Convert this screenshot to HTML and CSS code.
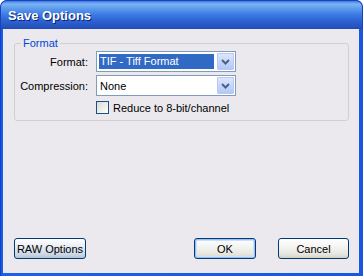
FILE: index.html
```html
<!DOCTYPE html>
<html>
<head>
<meta charset="utf-8">
<link rel="stylesheet" href="styles.css">
</head>
<body>
<div class="window">
  <div class="titlebar"><span class="title">Save Options</span></div>
  <div class="frame">
    <div class="client">
      <fieldset class="group">
        <legend class="legend">Format</legend>
        <div class="form">
          <label class="label">Format:</label>
          <div class="select">
            <div class="select-value"><span class="selected">TIF - Tiff Format</span></div>
            <div class="drop"><svg width="9" height="6" viewBox="0 0 9 6"><path d="M1 1 L4.5 4.5 L8 1" fill="none" stroke="#4d6185" stroke-width="2"/></svg></div>
          </div>
          <label class="label">Compression:</label>
          <div class="select">
            <div class="select-value"><span class="plain">None</span></div>
            <div class="drop"><svg width="9" height="6" viewBox="0 0 9 6"><path d="M1 1 L4.5 4.5 L8 1" fill="none" stroke="#4d6185" stroke-width="2"/></svg></div>
          </div>
          <span></span>
          <div class="check-row"><span class="checkbox"></span><span class="check-label">Reduce to 8-bit/channel</span></div>
        </div>
      </fieldset>
      <div class="spacer"></div>
      <div class="buttons">
        <button class="btn raw">RAW Options</button>
        <div class="right">
          <button class="btn ok"><span class="focus">OK</span></button>
          <button class="btn cancel">Cancel</button>
        </div>
      </div>
    </div>
  </div>
</div>
</body>
</html>
```
FILE: styles.css
```css
html, body {
  margin: 0;
  padding: 0;
  background: #ffffff;
}
body {
  width: 363px;
  height: 276px;
  overflow: hidden;
  font-family: "Liberation Sans", Arial, sans-serif;
  font-size: 11px;
  color: #000;
}
.window {
  width: 363px;
  height: 276px;
  display: flex;
  flex-direction: column;
  border-radius: 7px 7px 0 0;
  overflow: hidden;
  background: #0b3fcf;
}
.titlebar {
  height: 29px;
  flex: none;
  display: flex;
  align-items: center;
  padding-left: 7px;
  background: linear-gradient(to bottom, #3d7cea 0px, #7db4f4 3px, #5a98ec 8px, #3b78e2 14px, #2c62d2 20px, #2552be 26px, #1d45ad 29px);
  border: 1px solid #1c40b8;
  border-bottom: none;
  border-radius: 7px 7px 0 0;
  box-sizing: border-box;
}
.title {
  color: #fff;
  font-weight: bold;
  font-size: 13px;
  text-shadow: 1px 1px 0 #0a1f6a;
  margin-top: 1px;
}
.frame {
  flex: 1;
  display: flex;
  padding: 0 4px 3px 3px;
  background: linear-gradient(to right, #0a3cc4 0, #1f5ee6 2px, #1a57e0 100%);
}
.client {
  flex: 1;
  background: #ebe9ed;
  display: flex;
  flex-direction: column;
  padding: 8px 10px 14px 11px;
}
.group {
  margin: 0;
  border: 1px solid #d0d0cc;
  border-radius: 3px;
  padding: 0 0 4px 0;
  min-width: 0;
}
.legend {
  color: #0046d5;
  padding: 0 2px;
  margin-left: 6px;
  line-height: 13px;
}
.form {
  display: grid;
  grid-template-columns: 73px 1fr;
  column-gap: 8px;
  row-gap: 3px;
  align-items: center;
  margin-top: 1px;
}
.label {
  text-align: right;
}
.select {
  width: 140px;
  height: 21px;
  box-sizing: border-box;
  border: 1px solid #7f9db9;
  background: #fff;
  display: flex;
}
.select-value {
  flex: 1;
  display: flex;
  align-items: center;
  padding: 2px;
}
.selected {
  background: #316ac5;
  color: #fff;
  flex: 1;
  height: 15px;
  line-height: 15px;
  padding-left: 1px;
}
.plain {
  padding-left: 1px;
}
.drop {
  width: 17px;
  margin: 1px;
  box-sizing: border-box;
  border: 1px solid #b9c9ef;
  border-radius: 1px;
  background: linear-gradient(to bottom, #dce7fd, #c1d3fb 60%, #b3c8f5);
  display: flex;
  align-items: center;
  justify-content: center;
}
.check-row {
  display: flex;
  align-items: center;
  height: 17px;
}
.checkbox {
  width: 13px;
  height: 13px;
  box-sizing: border-box;
  border: 1px solid #1c5180;
  background: linear-gradient(135deg, #dcdad5, #fff);
  margin-right: 4px;
}
.spacer {
  flex: 1;
}
.buttons {
  display: flex;
  justify-content: space-between;
  align-items: flex-end;
}
.right {
  display: flex;
  gap: 22px;
}
.btn {
  font-family: inherit;
  font-size: 11px;
  color: #000;
  height: 21px;
  box-sizing: border-box;
  border: 1px solid #003c74;
  border-radius: 3px;
  background: linear-gradient(to bottom, #ffffff 0%, #f4f4f2 40%, #e6e5df 80%, #d6d0c5 100%);
  padding: 0;
  display: flex;
  align-items: center;
  justify-content: center;
}
.raw {
  width: 72px;
  background: linear-gradient(to bottom, #ffffff 0%, #e8edf5 40%, #cdd7e6 80%, #b6c3d8 100%);
}
.ok {
  width: 62px;
  box-shadow: inset 0 0 0 1px #9dbcf0, inset 0 0 0 2px #cde0fb;
}
.cancel {
  width: 71px;
}
```
